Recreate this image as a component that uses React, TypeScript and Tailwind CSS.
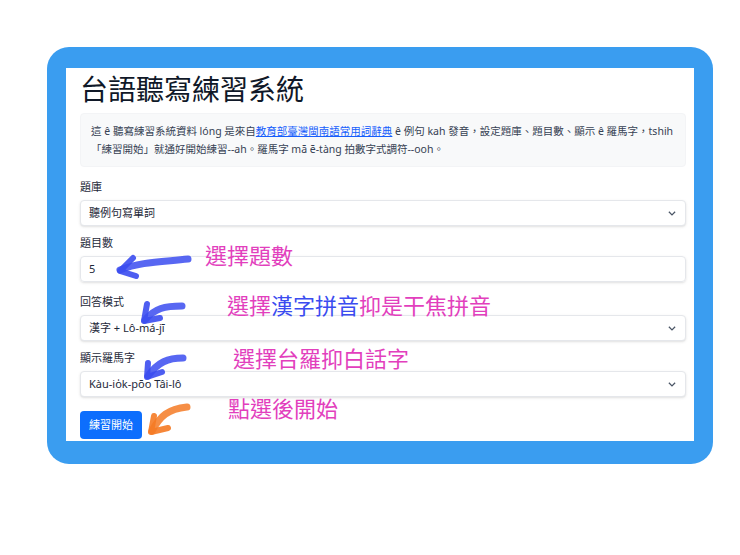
import React from 'react';

const font = { fontFamily: '"Noto Sans", "Noto Sans CJK TC", sans-serif' };

function Chevron() {
  return (
    <svg className="w-2.5 h-2.5 text-gray-600" viewBox="0 0 16 16" fill="none" stroke="currentColor" strokeWidth={2}>
      <path d="M3 6l5 5 5-5" />
    </svg>
  );
}

function Select({ value }: { value: string }) {
  return (
    <div className="flex items-center justify-between h-[26px] px-2 rounded border border-gray-200 bg-white text-[11px] text-gray-800 shadow-sm">
      <span>{value}</span>
      <Chevron />
    </div>
  );
}

function Arrow({ color, d, head }: { color: string; d: string; head: string }) {
  return (
    <svg className="absolute inset-0 w-full h-full" viewBox="0 0 740 555" fill="none">
      <path d={d} stroke={color} strokeWidth={7} strokeLinecap="round" strokeOpacity={0.85} />
      <path d={head} stroke={color} strokeWidth={6} strokeLinecap="round" strokeLinejoin="round" strokeOpacity={0.9} />
    </svg>
  );
}

export default function App() {
  return (
    <div className="relative w-[740px] h-[555px] bg-white overflow-hidden" style={font}>
      <div className="absolute left-[47px] top-[47px] w-[666px] h-[417px] rounded-[22px] bg-[#3a9df0] pt-[21px] px-[19px] pb-[23px]">
        <div className="w-full h-full bg-white overflow-hidden pl-[14px] pr-[8px]">
          <h1 className="text-[28px] leading-[38px] text-gray-900 mt-[2px] mb-[5px]">台語聽寫練習系統</h1>
          <div className="rounded border border-gray-100 bg-[#f8f9fa] px-[10px] py-[8px] text-[10.5px] leading-[18px] text-gray-700">
            這 ê 聽寫練習系統資料 lóng 是來自<span className="text-blue-600 underline">教育部臺灣閩南語常用詞辭典</span> ê 例句 kah 發音，設定題庫、題目數、顯示 ê 羅馬字，tshih「練習開始」就通好開始練習--ah。羅馬字 mā ē-tàng 拍數字式調符--ooh。
          </div>
          <div className="mt-[11px] text-[11px] text-gray-800 leading-[18px]">題庫</div>
          <div className="mt-[4px]"><Select value="聽例句寫單詞" /></div>
          <div className="mt-[8px] text-[11px] text-gray-800 leading-[18px]">題目數</div>
          <div className="mt-[4px] h-[26px] px-2 flex items-center rounded border border-gray-200 text-[11px] text-gray-800 shadow-sm">5</div>
          <div className="mt-[11px] text-[11px] text-gray-800 leading-[18px]">回答模式</div>
          <div className="mt-[4px]"><Select value="漢字 + Lô-má-jī" /></div>
          <div className="mt-[8px] text-[11px] text-gray-800 leading-[18px]">顯示羅馬字</div>
          <div className="mt-[4px]"><Select value="Kàu-io̍k-pōo Tâi-lô" /></div>
          <button className="mt-[14px] h-[28px] px-[9px] rounded bg-[#0d6efd] text-white text-[11px]">練習開始</button>
        </div>
      </div>

      <Arrow color="#3b4cf0" d="M188 259 C160 262 140 262 120 270" head="M133 258 L120 271 L136 276" />
      <Arrow color="#3b4cf0" d="M182 306 C165 306 155 308 145 320" head="M147 304 L144 321 L160 318" />
      <Arrow color="#3b4cf0" d="M183 358 C168 358 158 362 148 376" head="M148 363 L147 377 L162 372" />
      <Arrow color="#f57a24" d="M187 407 C168 409 160 416 152 431" head="M154 416 L151 432 L168 428" />

      <div className="absolute left-[205px] top-[240px] text-[22px] leading-[30px] text-[#e23fbd]">選擇題數</div>
      <div className="absolute left-[227px] top-[290px] text-[22px] leading-[30px] text-[#e23fbd]">選擇<span className="text-[#3b4cf0]">漢字拼音</span>抑是干焦拼音</div>
      <div className="absolute left-[233px] top-[343px] text-[22px] leading-[30px] text-[#e23fbd]">選擇台羅抑白話字</div>
      <div className="absolute left-[228px] top-[393px] text-[22px] leading-[30px] text-[#e23fbd]">點選後開始</div>
    </div>
  );
}
